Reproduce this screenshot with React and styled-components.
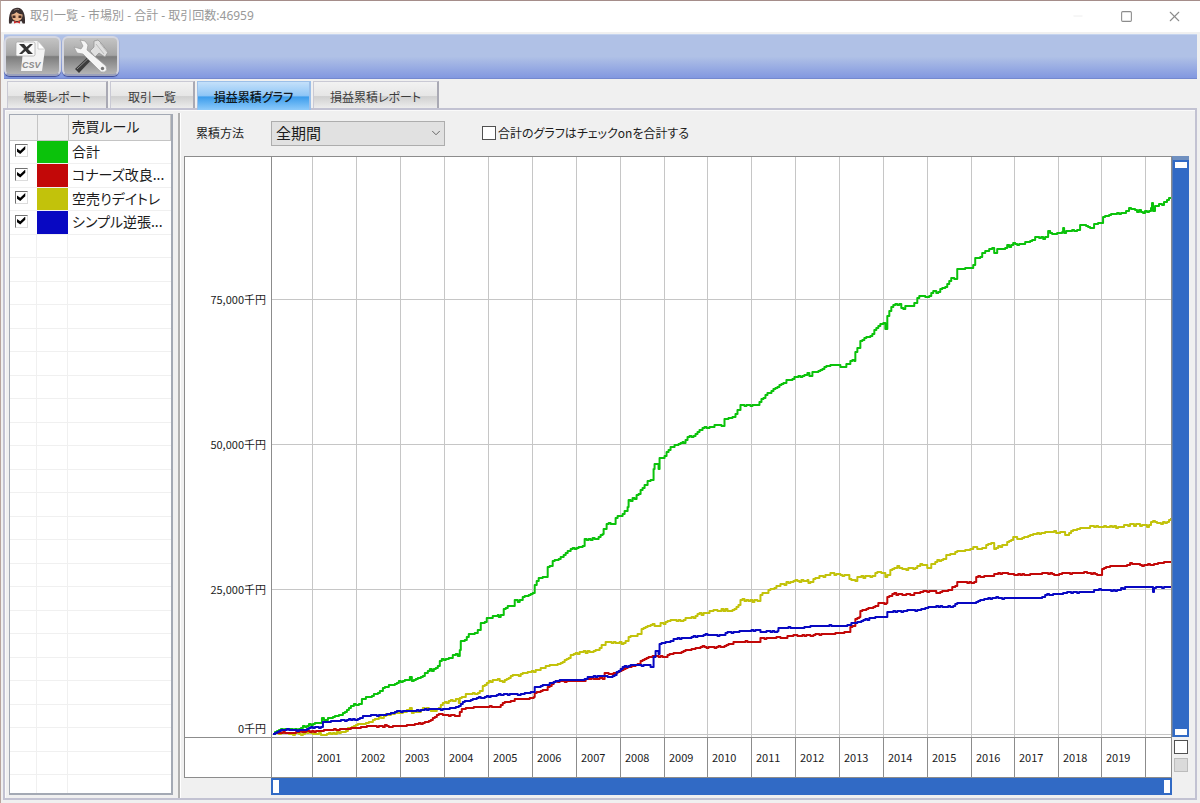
import React, { useState } from "react";
import styled, { createGlobalStyle, css } from "styled-components";
import { ChevronDown, Minus, Square, X } from "lucide-react";

const GlobalStyle = createGlobalStyle`
  *, *::before, *::after { box-sizing: border-box; }
  body {
    margin: 0;
    background: #f0f0f0;
    color: #1c1c1c;
    font: 12px/16px "Noto Sans CJK JP", "Liberation Sans", sans-serif;
  }
  button, input, select { font: inherit; color: inherit; margin: 0; padding: 0; }
`;

/* ---------- data ---------- */

const RULES = [
  { name: "合計", color: "#0bc20b" },
  { name: "コナーズ改良...", color: "#c20808" },
  { name: "空売りデイトレ", color: "#c2c20b" },
  { name: "シンプル逆張...", color: "#0808c2" },
];

const TABS = [
  { label: "概要レポート", width: 101 },
  { label: "取引一覧", width: 85 },
  { label: "損益累積グラフ", width: 114 },
  { label: "損益累積レポート", width: 126 },
];

const YEARS = Array.from({ length: 19 }, (_, i) => 2001 + i);
const Y_LABELS = ["75,000千円", "50,000千円", "25,000千円", "0千円"];

const PLOT = { left: 271, top: 157, right: 1171, bottom: 737 };
const YEAR_LINES = [312, 356, 400, 444, 488, 532, 576, 620, 664, 707, 751, 795, 839, 883, 927, 971, 1014, 1058, 1101, 1145];
const VALUE_LINES = [299, 444, 589, 734];
const YEAR_COLUMNS = [PLOT.left, ...YEAR_LINES]
  .map((x, i, all) => `${(all[i + 1] ?? PLOT.right) - x}fr`)
  .join(" ");

const SERIES = [
  {
    color: "#c2c20b",
    rough: 1.3,
    points:
      "272,734 318,733 322,735 332,733 343,732 347,728 357,724 368,722 383,716 390,713 402,712 409,708 411,713 420,710 426,708 434,711 442,703 455,699 458,703 459,698 468,694 477,693 482,686 488,681 495,680 502,682 512,675 518,676 525,673 533,672 540,668 543,668 560,663 573,654 597,650 605,642 623,643 628,637 637,634 645,627 650,625 663,624 670,620 683,620 687,618 693,618 697,614 707,613 715,610 732,610 736,607 740,600 757,601 760,595 770,589 793,581 807,580 808,583 813,579 830,573 840,575 847,575 849,579 855,581 857,577 870,577 875,573 883,573 885,577 890,570 897,566 902,569 913,569 920,564 927,568 935,562 943,559 946,555 953,554 957,551 970,549 973,547 980,549 991,543 994,549 1007,542 1013,537 1020,539 1033,534 1050,532 1060,532 1065,535 1080,528 1100,527 1120,527 1130,524 1147,527 1153,521 1157,523 1165,523 1171,518",
  },
  {
    color: "#c20808",
    rough: 0.7,
    points:
      "272,734 295,732 315,731 342,729 360,727 372,726 400,726 422,723 428,721 438,714 457,716 461,709 473,707 498,707 502,703 512,701 514,699 525,699 533,697 534,693 545,690 553,682 562,681 583,681 585,679 602,679 604,673 613,673 627,667 637,664 640,661 652,656 664,657 667,655 700,647 722,647 733,642 759,642 760,638 782,638 787,636 800,636 813,635 838,633 847,632 850,627 854,626 855,619 859,617 860,611 873,607 878,603 886,603 887,597 892,594 910,595 923,591 935,591 936,593 948,590 955,586 957,582 974,582 976,577 992,576 998,573 1020,575 1050,573 1057,575 1062,573 1087,573 1101,575 1102,569 1110,566 1125,566 1130,563 1140,565 1152,565 1160,563 1168,562 1171,562",
  },
  {
    color: "#0bc20b",
    rough: 1.1,
    points:
      "272,734 278,730 298,729 308,724 318,723 321,718 323,720 332,717 342,713 353,704 358,704 361,699 375,694 382,688 390,685 398,681 402,681 409,677 411,681 420,677 427,671 435,668 441,659 448,658 455,654 457,656 459,650 460,641 464,640 468,634 472,634 477,630 480,623 484,622 486,618 497,615 498,617 503,609 507,606 512,606 514,600 517,602 522,597 532,593 534,585 538,578 544,577 547,567 552,561 563,555 570,549 582,546 584,539 596,539 602,534 603,529 606,524 612,524 615,518 620,516 627,507 628,500 634,499 647,481 650,480 653,469 654,464 657,464 658,469 659,458 664,456 670,447 682,442 683,443 687,437 693,436 702,428 709,427 714,425 721,426 724,419 730,418 735,414 740,405 757,405 761,399 767,393 777,387 786,380 792,379 794,377 800,377 807,373 809,376 812,372 816,372 828,366 838,365 840,367 849,364 850,361 854,361 855,352 860,341 872,334 876,328 883,323 885,329 887,316 891,307 895,304 899,304 901,308 912,306 917,298 921,296 927,297 933,291 936,293 945,287 951,278 954,279 957,269 968,268 973,265 975,258 978,258 985,251 992,248 994,253 997,249 1003,249 1007,245 1009,247 1013,243 1017,245 1030,241 1035,237 1043,239 1048,231 1055,234 1062,232 1063,228 1064,233 1077,230 1080,225 1092,228 1094,224 1101,223 1103,217 1113,214 1124,213 1129,208 1141,212 1147,212 1151,208 1152,203 1153,211 1155,206 1162,205 1167,200 1171,199",
  },
  {
    color: "#0808c2",
    rough: 0.6,
    points:
      "272,734 280,730 302,730 308,728 320,727 322,722 332,721 357,719 362,716 382,715 388,714 396,711 408,711 432,709 447,709 458,706 462,702 472,699 503,694 520,694 533,692 534,687 545,685 555,681 565,680 582,680 587,677 612,676 622,667 637,665 649,665 650,667 653,657 655,651 658,654 659,644 668,642 673,639 687,638 703,635 722,635 725,633 743,631 758,630 760,632 777,631 778,628 802,628 813,626 838,626 845,626 853,623 875,617 886,617 887,612 917,610 928,607 953,606 957,603 974,603 978,601 988,598 1040,598 1045,595 1058,594 1063,593 1090,592 1099,589 1115,591 1127,587 1150,587 1153,592 1154,588 1171,586",
  },
];

function wobble(n) {
  const v = Math.sin(n * 127.1) * 43758.5453;
  return (v - Math.floor(v)) * 2 - 1;
}

function tracePath(points, rough) {
  const keys = points.split(" ").map((p) => p.split(",").map(Number));
  const [[startX, startY]] = keys;
  let d = `M${startX} ${startY}`;
  keys.forEach(([x, y], i) => {
    d += `H${x}V${y}`;
    const next = keys[i + 1];
    if (!next) return;
    for (let px = x + 2; px < next[0] - 1; px += 2) {
      const t = (px - x) / (next[0] - x);
      d += `H${px}V${Math.round(y + (next[1] - y) * t + wobble(px + y) * rough)}`;
    }
  });
  return d;
}

/* ---------- window frame ---------- */

const Window = styled.div`
  display: flex;
  flex-direction: column;
  height: 100vh;
  min-height: 480px;
  border-top: 1px solid #a58d8a;
  border-left: 1px solid #b8a49c;
  background: #f0f0f0;
`;

const TitleBar = styled.header`
  display: flex;
  align-items: center;
  height: 31px;
  padding: 0 2px 1px 7px;
  background: #fff;
`;

const Title = styled.h1`
  flex: 1;
  margin: 0 0 0 4px;
  font: 12px/16px "Noto Sans", "Noto Sans CJK JP", sans-serif;
  color: #999;
`;

const WindowButton = styled.button`
  display: flex;
  align-items: center;
  justify-content: center;
  width: 48px;
  height: 30px;
  border: 0;
  background: none;
  color: ${(p) => (p.$faint ? "#ececec" : "#8c8c8c")};
`;

const Toolbar = styled.div`
  display: flex;
  gap: 1px;
  height: 45px;
  margin: 2px 3px 0;
  padding: 1px 0 0;
  background: linear-gradient(#b0c1e6 0 50%, #8298e0);
  border-top: 1px solid #c4d3ee;
  border-bottom: 1px solid #7489cf;
`;

const ToolButton = styled.button`
  width: 57px;
  height: 40px;
  border: 2px solid #d4d6e0;
  border-bottom-color: #9aa0bc;
  border-radius: 6px;
  background: linear-gradient(#c4c4c4, #a4a4a4 48%, #7d7d7d 52%, #b4b4b4);
  box-shadow: 0 1px 1px #3c4a94;
  svg { display: block; margin: 0 auto; }
`;

/* ---------- tabs and panel ---------- */

const TabBar = styled.div`
  display: flex;
  gap: 2px;
  height: 29px;
  padding: 2px 6px 0;
`;

const Tab = styled.button`
  width: ${(p) => p.$width}px;
  height: 27px;
  padding-top: 4px;
  border: 1px solid #c9c9d4;
  border-bottom: 0;
  border-right: 2px solid #a9a9b4;
  background: linear-gradient(#f2f2f2, #e6e6e6 52%, #d0d0d0 56%, #ececec);
  color: #3c3c3c;
  font-feature-settings: "palt";
  white-space: nowrap;
  ${(p) =>
    p.$active &&
    css`
      z-index: 1;
      height: 29px;
      padding-bottom: 2px;
      border-color: #9cbfe8;
      background: linear-gradient(#c4e0fa, #8fc6f6 48%, #3d9dec 54%, #8ecbfb);
      color: #101820;
      font-weight: 500;
    `}
`;

const Panel = styled.main`
  display: flex;
  flex: 1;
  min-height: 0;
  margin: 0 3px 3px 2px;
  padding: 0 4px;
  border: 2px solid #c2c2d2;
  box-shadow: inset 1px 1px 0 #fafafa;
`;

const RuleList = styled.section`
  display: flex;
  flex-direction: column;
  width: 164px;
  margin: 4px 0 3px;
  border: 2px solid #a3a9b4;
  border-top-width: 1px;
  border-left-width: 1px;
  background: #fff;
`;

const RuleTable = styled.table`
  width: 100%;
  table-layout: fixed;
  border-collapse: collapse;
  font-size: 14px;
  font-feature-settings: "palt";

  th, td { padding: 0 0 2px; }
  th {
    height: 25px;
    padding-left: 3px;
    border: 1px solid #c4c4c4;
    border-width: 0 1px 1px 0;
    background: #f0f0f0;
    font-weight: 400;
    text-align: left;
  }
  td {
    height: 23px;
    border-bottom: 1px solid #f0f0f0;
    white-space: nowrap;
  }
  tr:nth-child(even) td { height: 24px; }
`;

const CheckCol = styled.col`
  width: 27px;
`;
const SwatchCol = styled.col`
  width: 31px;
`;

const SwatchCell = styled.td`
  background: ${(p) => p.$color};
  background-clip: padding-box;
`;

const NameCell = styled.td`
  && { padding-left: 4px; }
`;

const EmptyRows = styled.div`
  flex: 1;
  background:
    linear-gradient(90deg, transparent 26px, #f0f0f0 26px 27px, transparent 27px 57px, #f0f0f0 57px 58px, transparent 58px),
    repeating-linear-gradient(transparent 0 22px, #f0f0f0 22px 23px, transparent 23px 46px, #f0f0f0 46px 47px);
`;

const RuleCheck = styled.input`
  appearance: none;
  display: block;
  width: 13px;
  height: 13px;
  margin-left: 5px;
  border: 1px solid #707070;
  border-right-color: #dcdcdc;
  border-bottom-color: #dcdcdc;
  background: #fff;
  &:checked::after {
    content: "";
    display: block;
    width: 9px;
    height: 8px;
    margin: 1px;
    background: #000;
    clip-path: polygon(0 32%, 36% 60%, 92% 0, 92% 40%, 36% 100%, 0 72%);
  }
`;

const Splitter = styled.div`
  width: 3px;
  margin: 3px 3px 0 5px;
  border-left: 2px solid #b0b0b0;
  border-right: 1px solid #fff;
`;

const ChartPane = styled.section`
  display: flex;
  flex: 1;
  flex-direction: column;
  min-width: 0;
  padding: 0 0 3px;
`;

const FilterBar = styled.div`
  display: flex;
  align-items: center;
  height: 46px;
  padding: 0 0 0 12px;
  font-feature-settings: "palt";
`;

const FilterLabel = styled.label`
  width: 75px;
`;

const SelectBox = styled.div`
  display: grid;
  width: 174px;
  height: 25px;
  margin-right: 37px;
  > * { grid-area: 1 / 1; }
  svg { place-self: center end; margin-right: 2px; pointer-events: none; }
`;

const Select = styled.select`
  appearance: none;
  padding: 0 4px;
  border: 1px solid #adadad;
  border-radius: 0;
  background: #e1e1e1;
  font-size: 15px;
`;

const SumLabel = styled.label`
  display: flex;
  align-items: center;
  gap: 2px;
  white-space: nowrap;
`;

const PlainCheck = styled.input`
  appearance: none;
  width: 14px;
  height: 14px;
  border: 1px solid #505050;
  background: #fff;
  &:checked { box-shadow: inset 0 0 0 3px #fff; background: #333; }
  &:disabled { border-color: #bcbcbc; background: #dadada; }
`;

/* ---------- chart ---------- */

const ChartGrid = styled.div`
  display: grid;
  flex: 1;
  grid-template-columns: 87px minmax(0, 1fr) 17px;
  grid-template-rows: minmax(0, 1fr) 41px 17px;
  min-height: 0;
  margin-right: 2px;
`;

const YAxis = styled.div`
  display: grid;
  grid-template-rows: 151fr 145fr 145fr 139fr;
  align-items: end;
  justify-items: end;
  padding-right: 5px;
  border: 1px solid #8c8c8c;
  border-width: 1px 0 0 1px;
  background: #fff;
  font-size: 11px;
  line-height: 18px;
`;

const Plot = styled.div`
  border: 1px solid #8c8c8c;
  border-bottom: 0;
  background: #fff;
  svg { display: block; width: 100%; height: 100%; }
`;

const AxisCorner = styled.div`
  border: 1px solid #8c8c8c;
  border-right: 0;
  background: #fff;
`;

const XAxis = styled.div`
  display: grid;
  grid-template-columns: ${YEAR_COLUMNS};
  border: 1px solid #8c8c8c;
  border-left: 0;
  background: #fff;
  font-size: 11px;
  line-height: 39px;
`;

const YearCell = styled.span`
  min-width: 0;
  padding-left: 4px;
  border-left: 1px solid #8c8c8c;
`;

const RangeBar = styled.div`
  display: flex;
  justify-content: space-between;
  background: #316ac5;
  ${(p) =>
    p.$vertical
      ? css`
          flex-direction: column;
          padding: 2px;
          border-top: 4px solid #7090c0;
          border-left: 1px solid #5c7eb4;
        `
      : css`
          grid-column: 2;
          padding: 2px;
        `}
`;

const RangeHandle = styled.button`
  width: ${(p) => (p.$vertical ? 12 : 6)}px;
  height: ${(p) => (p.$vertical ? 6 : 13)}px;
  border: 0;
  background: #fff;
`;

const SideChecks = styled.div`
  display: flex;
  flex-direction: column;
  gap: 4px;
  padding: 3px 0 0 2px;
`;

/* ---------- drawings ---------- */

const Avatar = () => (
  <svg width="18" height="18" viewBox="0 0 18 18" aria-hidden="true">
    <path d="M1 16.500C.5 8 2.500 1 9 .8S17.500 8 17 16.500l-4.500.3h-7z" fill="#3a2f2f" />
    <path d="M3.500 7.500c2-.3 3.500-1 5-2.500 1.500 1.500 3.500 2.300 6 2.500.2 4-2 6.500-5.500 6.500s-5.500-2.500-5.500-6.500z" fill="#e8b48c" />
    <path d="M4.500 8.500h3v2.500h-3zM10.500 8.500h3v2.500h-3z" fill="#4a2c22" />
    <path d="M4.500 14l4.500 1.200 4.500-1.200 1.500 3.200H3z" fill="#eee" />
    <path d="M6 13.800l3 1.200 3-1.200v2.600l-3-.8-3 .8z" fill="#d22b2b" />
    <path d="M6 3.500C7 2.500 9 2 11 2.600" stroke="#85706c" fill="none" />
  </svg>
);

const CsvIcon = () => (
  <svg width="36" height="35" viewBox="0 0 36 35" aria-hidden="true">
    <path d="M9 2h14l7 8-3 22H6z" fill="#f3f3f3" />
    <path d="M23 2l7 8h-7z" fill="#fff" stroke="#b0b0b0" strokeWidth=".6" />
    <rect x="1" y="3" width="19" height="14" rx="1.500" fill="#fafafa" stroke="#a5a5a5" strokeWidth=".7" />
    <path d="M4 5h5l2.500 3L15 5h3l-5 5 5 5h-5l-2.500-3L7 15H4l5-5z" fill="#333" />
    <text x="7" y="29" fontFamily="Liberation Sans" fontSize="9" fontStyle="italic" fontWeight="700" fill="#8b8b8b">
      CSV
    </text>
  </svg>
);

const ToolsIcon = () => (
  <svg width="38" height="35" viewBox="0 0 38 35" aria-hidden="true">
    <path d="M3 30L20 14l3 3L7 34z" fill="#3c3c3c" />
    <path d="M5 30L21 15" stroke="#8d8d8d" strokeWidth="1" />
    <path d="M18 12l4-4 0-6 4-1 3 3 7 9-3 5-6-4-4 4z" fill="#e0e0e0" stroke="#8e8e8e" strokeWidth=".7" />
    <path d="M24 5l8 10M28 4l7 9" stroke="#b0b0b0" strokeWidth=".8" />
    <path
      d="M8 1l5 1 3 4-1 5L34 27q2 4-1 6-4 1-6-2L11 15l-6-1-3-6 7 2 2-3z"
      fill="#f5f5f5"
      stroke="#9a9a9a"
      strokeWidth=".7"
    />
    <circle cx="30.500" cy="29.500" r="1.700" fill="#777" />
  </svg>
);

const ProfitCurves = () => (
  <svg
    viewBox={`${PLOT.left} ${PLOT.top} ${PLOT.right - PLOT.left} ${PLOT.bottom - PLOT.top}`}
    preserveAspectRatio="none"
    role="img"
    aria-label="損益累積グラフ"
  >
    <g stroke="#c6c6c6" shapeRendering="crispEdges">
      {YEAR_LINES.map((x) => (
        <line key={x} x1={x} x2={x} y1={PLOT.top} y2={PLOT.bottom} vectorEffect="non-scaling-stroke" />
      ))}
      {VALUE_LINES.map((y) => (
        <line key={y} x1={PLOT.left} x2={PLOT.right} y1={y} y2={y} vectorEffect="non-scaling-stroke" />
      ))}
    </g>
    {SERIES.map((s) => (
      <path
        key={s.color}
        d={tracePath(s.points, s.rough)}
        fill="none"
        stroke={s.color}
        strokeWidth="2"
        strokeLinejoin="round"
        vectorEffect="non-scaling-stroke"
      />
    ))}
  </svg>
);

/* ---------- page ---------- */

export default function App() {
  const [active, setActive] = useState(2);

  return (
    <>
      <GlobalStyle />
      <Window>
        <TitleBar>
          <Avatar />
          <Title>取引一覧 - 市場別 - 合計 - 取引回数:46959</Title>
          <WindowButton $faint aria-label="最小化">
            <Minus size={14} strokeWidth={1.5} />
          </WindowButton>
          <WindowButton aria-label="最大化">
            <Square size={13} strokeWidth={2} strokeLinejoin="miter" />
          </WindowButton>
          <WindowButton aria-label="閉じる">
            <X size={17} strokeWidth={1.5} />
          </WindowButton>
        </TitleBar>

        <Toolbar>
          <ToolButton aria-label="CSV出力">
            <CsvIcon />
          </ToolButton>
          <ToolButton aria-label="設定">
            <ToolsIcon />
          </ToolButton>
        </Toolbar>

        <TabBar role="tablist">
          {TABS.map((t, i) => (
            <Tab
              key={t.label}
              role="tab"
              aria-selected={i === active}
              $width={t.width}
              $active={i === active}
              onClick={() => setActive(i)}
            >
              {t.label}
            </Tab>
          ))}
        </TabBar>

        <Panel>
          <RuleList>
            <RuleTable>
              <colgroup>
                <CheckCol />
                <SwatchCol />
                <col />
              </colgroup>
              <thead>
                <tr>
                  <th />
                  <th />
                  <th>売買ルール</th>
                </tr>
              </thead>
              <tbody>
                {RULES.map((r) => (
                  <tr key={r.name}>
                    <td>
                      <RuleCheck type="checkbox" defaultChecked aria-label={r.name} />
                    </td>
                    <SwatchCell $color={r.color} />
                    <NameCell>{r.name}</NameCell>
                  </tr>
                ))}
              </tbody>
            </RuleTable>
            <EmptyRows />
          </RuleList>

          <Splitter />

          <ChartPane>
            <FilterBar>
              <FilterLabel htmlFor="method">累積方法</FilterLabel>
              <SelectBox>
                <Select id="method" defaultValue="all">
                  <option value="all">全期間</option>
                </Select>
                <ChevronDown size={14} strokeWidth={1.5} color="#555" />
              </SelectBox>
              <SumLabel>
                <PlainCheck type="checkbox" />
                合計のグラフはチェックonを合計する
              </SumLabel>
            </FilterBar>

            <ChartGrid>
              <YAxis>
                {Y_LABELS.map((l) => (
                  <span key={l}>{l}</span>
                ))}
              </YAxis>
              <Plot>
                <ProfitCurves />
              </Plot>
              <RangeBar $vertical>
                <RangeHandle $vertical aria-label="上限" />
                <RangeHandle $vertical aria-label="下限" />
              </RangeBar>
              <AxisCorner />
              <XAxis>
                <YearCell />
                {YEARS.map((y) => (
                  <YearCell key={y}>{y}</YearCell>
                ))}
                <YearCell />
              </XAxis>
              <SideChecks>
                <PlainCheck type="checkbox" aria-label="固定" />
                <PlainCheck type="checkbox" aria-label="同期" disabled />
              </SideChecks>
              <RangeBar>
                <RangeHandle aria-label="開始" />
                <RangeHandle aria-label="終了" />
              </RangeBar>
            </ChartGrid>
          </ChartPane>
        </Panel>
      </Window>
    </>
  );
}
